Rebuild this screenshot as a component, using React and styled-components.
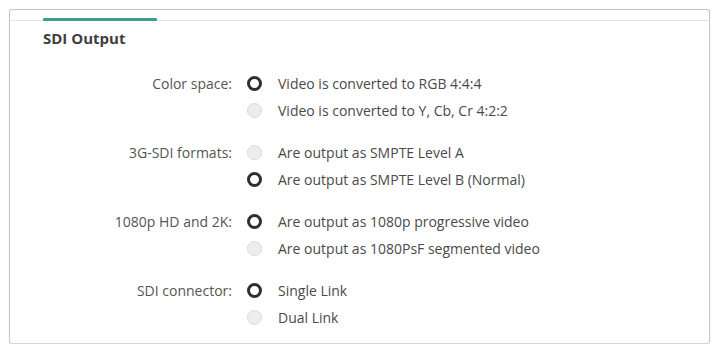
import React from 'react';
import styled, { createGlobalStyle } from 'styled-components';

const GlobalStyle = createGlobalStyle`
    html, body {
        margin: 0;
        padding: 0;
        background: #ffffff;
        font-family: "Open Sans", "Noto Sans", sans-serif;
    }
`;

const Page = styled.div`
    padding: 9px 5px 0 9px;
`;

const Panel = styled.section`
    height: 335px;
    box-sizing: border-box;
    border: 1px solid #c6c6c6;
    border-bottom-color: #d4d4d4;
    border-radius: 3px;
    background: #fff;
    box-shadow: 0 0 2px rgba(0, 0, 0, 0.08);
`;

const TabBar = styled.div`
    height: 10px;
    border-bottom: 1px solid #e3e3e3;
    padding-left: 33px;
    display: flex;
    align-items: flex-end;
`;

const TabIndicator = styled.div`
    width: 114px;
    height: 3px;
    margin-bottom: -1px;
    background: #3b9e8b;
    border-radius: 1px;
`;

const Title = styled.h2`
    margin: 0;
    padding: 8px 0 0 33px;
    font-size: 15px;
    font-weight: 700;
    color: #3e3e3e;
    line-height: 18px;
`;

const Form = styled.div`
    display: grid;
    grid-template-columns: 222px 1fr;
    column-gap: 15px;
    row-gap: 15px;
    margin-top: 23px;
`;

const Label = styled.div`
    text-align: right;
    font-size: 14px;
    color: #555;
    height: 27px;
    line-height: 27px;
`;

const Options = styled.div`
    display: flex;
    flex-direction: column;
`;

const Option = styled.div`
    display: flex;
    align-items: center;
    height: 27px;
    gap: 16px;
    font-size: 14px;
    color: #4a4a4a;
`;

const Radio = styled.span`
    width: 15px;
    height: 15px;
    box-sizing: border-box;
    border-radius: 50%;
    flex-shrink: 0;
    border: ${(p) => (p.$checked ? '3.5px solid #2f2f2f' : '1px solid #dadada')};
    background: ${(p) => (p.$checked ? '#fff' : '#ededed')};
`;

const groups = [
    {
        label: 'Color space:',
        options: ['Video is converted to RGB 4:4:4', 'Video is converted to Y, Cb, Cr 4:2:2'],
        selected: 0,
    },
    {
        label: '3G-SDI formats:',
        options: ['Are output as SMPTE Level A', 'Are output as SMPTE Level B (Normal)'],
        selected: 1,
    },
    {
        label: '1080p HD and 2K:',
        options: ['Are output as 1080p progressive video', 'Are output as 1080PsF segmented video'],
        selected: 0,
    },
    {
        label: 'SDI connector:',
        options: ['Single Link', 'Dual Link'],
        selected: 0,
    },
];

const App = () => {
    return (
        <Page>
            <GlobalStyle />
            <Panel>
                <TabBar>
                    <TabIndicator />
                </TabBar>
                <Title>SDI Output</Title>
                <Form>
                    {groups.map((g) => (
                        <React.Fragment key={g.label}>
                            <Label>{g.label}</Label>
                            <Options>
                                {g.options.map((o, i) => (
                                    <Option key={o}>
                                        <Radio $checked={i === g.selected} />
                                        {o}
                                    </Option>
                                ))}
                            </Options>
                        </React.Fragment>
                    ))}
                </Form>
            </Panel>
        </Page>
    );
};

export default App;
